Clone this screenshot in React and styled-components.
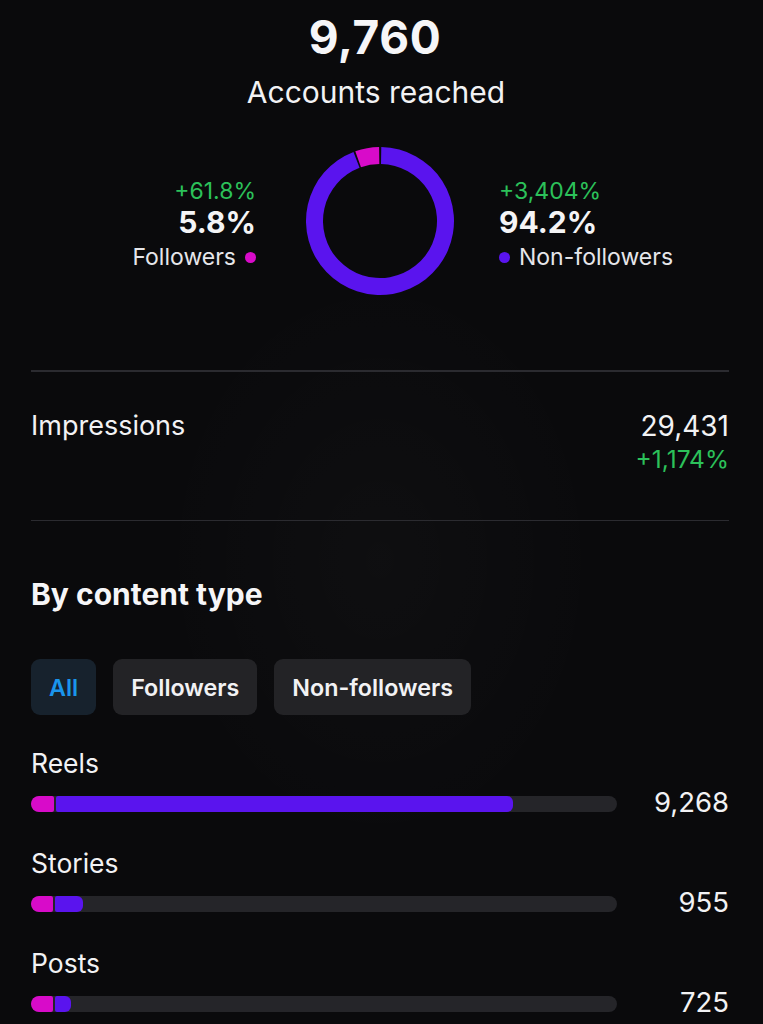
import React from "react";
import styled, { createGlobalStyle } from "styled-components";

const GlobalStyle = createGlobalStyle`
  html, body {
    margin: 0;
    padding: 0;
    background: #0a0a0c;
  }
  body {
    font-family: Inter, "Noto Sans", sans-serif;
    color: #f4f4f6;
    -webkit-font-smoothing: antialiased;
  }
`;

const PINK = "#d80bc9";
const PURPLE = "#5a14ee";
const GREEN = "#2cc15a";

const Page = styled.div`
  width: 763px;
  height: 1024px;
  overflow: hidden;
  box-sizing: border-box;
  padding: 0 34px 0 31px;
  background:
    radial-gradient(ellipse 320px 420px at 380px 560px, rgba(255,255,255,0.018), transparent 70%),
    #0a0a0c;
`;

const Hero = styled.section`
  display: flex;
  flex-direction: column;
  align-items: center;
  padding-top: 10px;
`;

const BigNumber = styled.div`
  font-weight: 700;
  font-size: 46px;
  line-height: 54px;
  letter-spacing: 0.6px;
  color: #f6f6f8;
  margin-left: -10px;
`;

const HeroLabel = styled.div`
  font-size: 30px;
  line-height: 36px;
  margin-top: 10px;
  margin-left: -8px;
  color: #f2f2f4;
`;

const Split = styled.div`
  display: grid;
  grid-template-columns: 1fr 148px 1fr;
  column-gap: 45px;
  align-items: center;
  margin-top: 36px;
  width: 100%;
`;

const Side = styled.div`
  display: flex;
  flex-direction: column;
  align-items: ${(p) => (p.$right ? "flex-start" : "flex-end")};
  padding-right: ${(p) => (p.$right ? 0 : 5)}px;
  margin-top: 8px;
`;

const Delta = styled.div`
  color: ${GREEN};
  font-size: 23px;
  line-height: 26px;
`;

const Share = styled.div`
  font-weight: 700;
  font-size: 30px;
  line-height: 34px;
  margin-top: 1px;
`;

const Legend = styled.div`
  display: flex;
  align-items: center;
  gap: 9px;
  font-size: 23px;
  line-height: 30px;
  color: #e6e6ea;
  margin-top: 3px;
`;

const Dot = styled.span`
  width: 11px;
  height: 11px;
  border-radius: 50%;
  background: ${(p) => p.$color};
  display: inline-block;
`;

const Divider = styled.hr`
  border: none;
  height: 1.5px;
  background: #2b2b30;
  margin: ${(p) => p.$m || "0"};
`;

const StatRow = styled.div`
  display: flex;
  justify-content: space-between;
  align-items: flex-start;
  padding: 37px 0 45px;
`;

const StatLabel = styled.div`
  font-size: 27px;
  line-height: 34px;
  color: #f2f2f4;
`;

const StatValues = styled.div`
  display: flex;
  flex-direction: column;
  align-items: flex-end;
`;

const StatValue = styled.div`
  font-size: 28px;
  line-height: 34px;
  color: #f2f2f4;
`;

const StatDelta = styled.div`
  font-size: 24.5px;
  line-height: 32px;
  color: ${GREEN};
`;

const SectionTitle = styled.h2`
  margin: 55px 0 0;
  font-weight: 700;
  font-size: 30px;
  line-height: 36px;
  color: #f6f6f8;
`;

const Chips = styled.div`
  display: flex;
  gap: 17px;
  margin-top: 47px;
`;

const Chip = styled.button`
  height: 56px;
  padding: 0 18px;
  border: none;
  border-radius: 9px;
  font-family: Inter, "Noto Sans", sans-serif;
  font-weight: 600;
  font-size: 23.3px;
  color: ${(p) => (p.$active ? "#1a95ec" : "#f2f2f4")};
  background: ${(p) => (p.$active ? "#17222d" : "#232326")};
`;

const Rows = styled.div`
  display: flex;
  flex-direction: column;
  gap: 23px;
  margin-top: 30px;
`;

const TypeRow = styled.div`
  display: flex;
  flex-direction: column;
`;

const TypeLabel = styled.div`
  font-size: 26.5px;
  line-height: 36px;
  color: #f2f2f4;
`;

const BarLine = styled.div`
  display: flex;
  align-items: center;
  justify-content: space-between;
  margin-top: 5px;
  height: 36px;
`;

const Track = styled.div`
  width: 586px;
  height: 16px;
  border-radius: 8px;
  background: #252529;
  display: flex;
  gap: 2px;
  overflow: hidden;
`;

const Seg = styled.div`
  height: 100%;
  background: ${(p) => p.$color};
  border-radius: ${(p) => (p.$first ? "6px 2px 2px 6px" : "2px 6px 6px 2px")};
  flex: none;
`;

const TypeValue = styled.div`
  font-size: 27.5px;
  line-height: 34px;
  color: #f2f2f4;
  margin-top: -5px;
`;

function polar(cx, cy, r, deg) {
  const a = ((deg - 90) * Math.PI) / 180;
  return [cx + r * Math.cos(a), cy + r * Math.sin(a)];
}

function arcPath(cx, cy, rOut, rIn, start, end) {
  const [x1, y1] = polar(cx, cy, rOut, start);
  const [x2, y2] = polar(cx, cy, rOut, end);
  const [x3, y3] = polar(cx, cy, rIn, end);
  const [x4, y4] = polar(cx, cy, rIn, start);
  const large = end - start > 180 ? 1 : 0;
  return `M${x1} ${y1} A${rOut} ${rOut} 0 ${large} 1 ${x2} ${y2} L${x3} ${y3} A${rIn} ${rIn} 0 ${large} 0 ${x4} ${y4} Z`;
}

function Donut() {
  const c = 74;
  return (
    <svg width="148" height="150" viewBox="0 0 148 148">
      <path d={arcPath(c, c, 74, 57, 1, 339)} fill={PURPLE} />
      <path d={arcPath(c, c, 74, 57, 340.5, 359.3)} fill={PINK} />
    </svg>
  );
}

const types = [
  { name: "Reels", value: "9,268", pink: 23, purple: 457 },
  { name: "Stories", value: "955", pink: 22, purple: 28 },
  { name: "Posts", value: "725", pink: 22, purple: 16 },
];

export default function App() {
  return (
    <Page>
      <GlobalStyle />
      <Hero>
        <BigNumber>9,760</BigNumber>
        <HeroLabel>Accounts reached</HeroLabel>
        <Split>
          <Side>
            <Delta>+61.8%</Delta>
            <Share>5.8%</Share>
            <Legend>
              Followers <Dot $color={PINK} />
            </Legend>
          </Side>
          <Donut />
          <Side $right>
            <Delta>+3,404%</Delta>
            <Share>94.2%</Share>
            <Legend>
              <Dot $color={PURPLE} /> Non-followers
            </Legend>
          </Side>
        </Split>
      </Hero>

      <Divider $m="74px 0 0" />
      <StatRow>
        <StatLabel>Impressions</StatLabel>
        <StatValues>
          <StatValue>29,431</StatValue>
          <StatDelta>+1,174%</StatDelta>
        </StatValues>
      </StatRow>
      <Divider />

      <SectionTitle>By content type</SectionTitle>
      <Chips>
        <Chip $active>All</Chip>
        <Chip>Followers</Chip>
        <Chip>Non-followers</Chip>
      </Chips>

      <Rows>
        {types.map((t) => (
          <TypeRow key={t.name}>
            <TypeLabel>{t.name}</TypeLabel>
            <BarLine>
              <Track>
                <Seg $first $color={PINK} style={{ width: t.pink }} />
                <Seg $color={PURPLE} style={{ width: t.purple }} />
              </Track>
              <TypeValue>{t.value}</TypeValue>
            </BarLine>
          </TypeRow>
        ))}
      </Rows>
    </Page>
  );
}
